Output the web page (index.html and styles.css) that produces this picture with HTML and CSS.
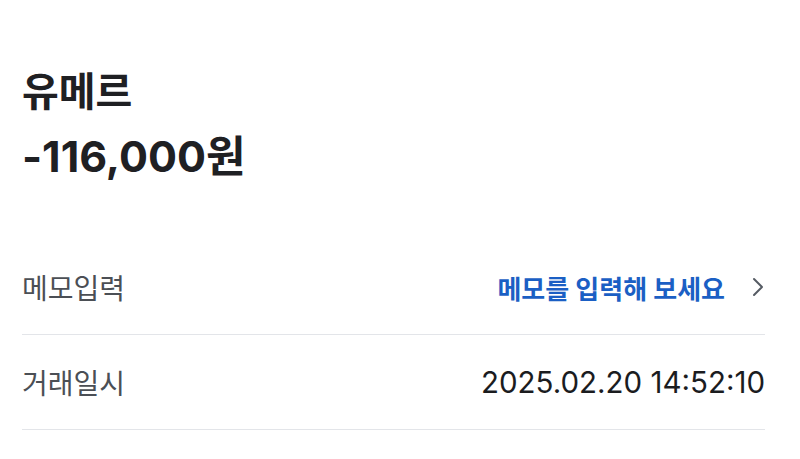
FILE: index.html
```html
<!DOCTYPE html>
<html lang="ko">
  <head>
    <meta charset="utf-8">
    <title>거래 상세</title>
    <link rel="stylesheet" href="styles.css">
  </head>
  <body>
    <div class="detail">
      <div class="summary">
        <p class="merchant">유메르</p>
        <p class="amount">-116,000원</p>
      </div>

      <div class="info-row">
        <span class="info-label">메모입력</span>
        <span class="memo-link">
          메모를 입력해 보세요
          <svg class="chevron" width="14" height="22" viewBox="0 0 14 22">
            <path d="M3 3 L11 11 L3 19" fill="none" stroke="#555b63" stroke-width="2" stroke-linecap="round" stroke-linejoin="round"/>
          </svg>
        </span>
      </div>

      <div class="info-row">
        <span class="info-label">거래일시</span>
        <span class="info-value">2025.02.20 14:52:10</span>
      </div>
    </div>
  </body>
</html>
```

FILE: styles.css
```css
body {
  margin: 0;
  background-color: white;
  font-family: Inter, "Noto Sans CJK KR", sans-serif;
}

.detail {
  padding: 60px 35px 0 22px;
}

.summary {
  margin-bottom: 52px;
}

.merchant,
.amount {
  margin: 0;
  color: #1f2023;
  font-weight: 700;
  font-size: 40px;
  line-height: 64px;
}

.amount {
  font-size: 43px;
}

.info-row {
  display: flex;
  justify-content: space-between;
  align-items: center;
  height: 94px;
  border-bottom: 1px solid #e3e5e9;
}

.info-label {
  color: #4b4f55;
  font-size: 28px;
}

.memo-link {
  display: flex;
  align-items: center;
  gap: 26px;
  color: #1b5fc4;
  font-size: 26px;
  font-weight: 700;
}

.info-value {
  color: #1b1c1f;
  font-size: 29.5px;
}
```
